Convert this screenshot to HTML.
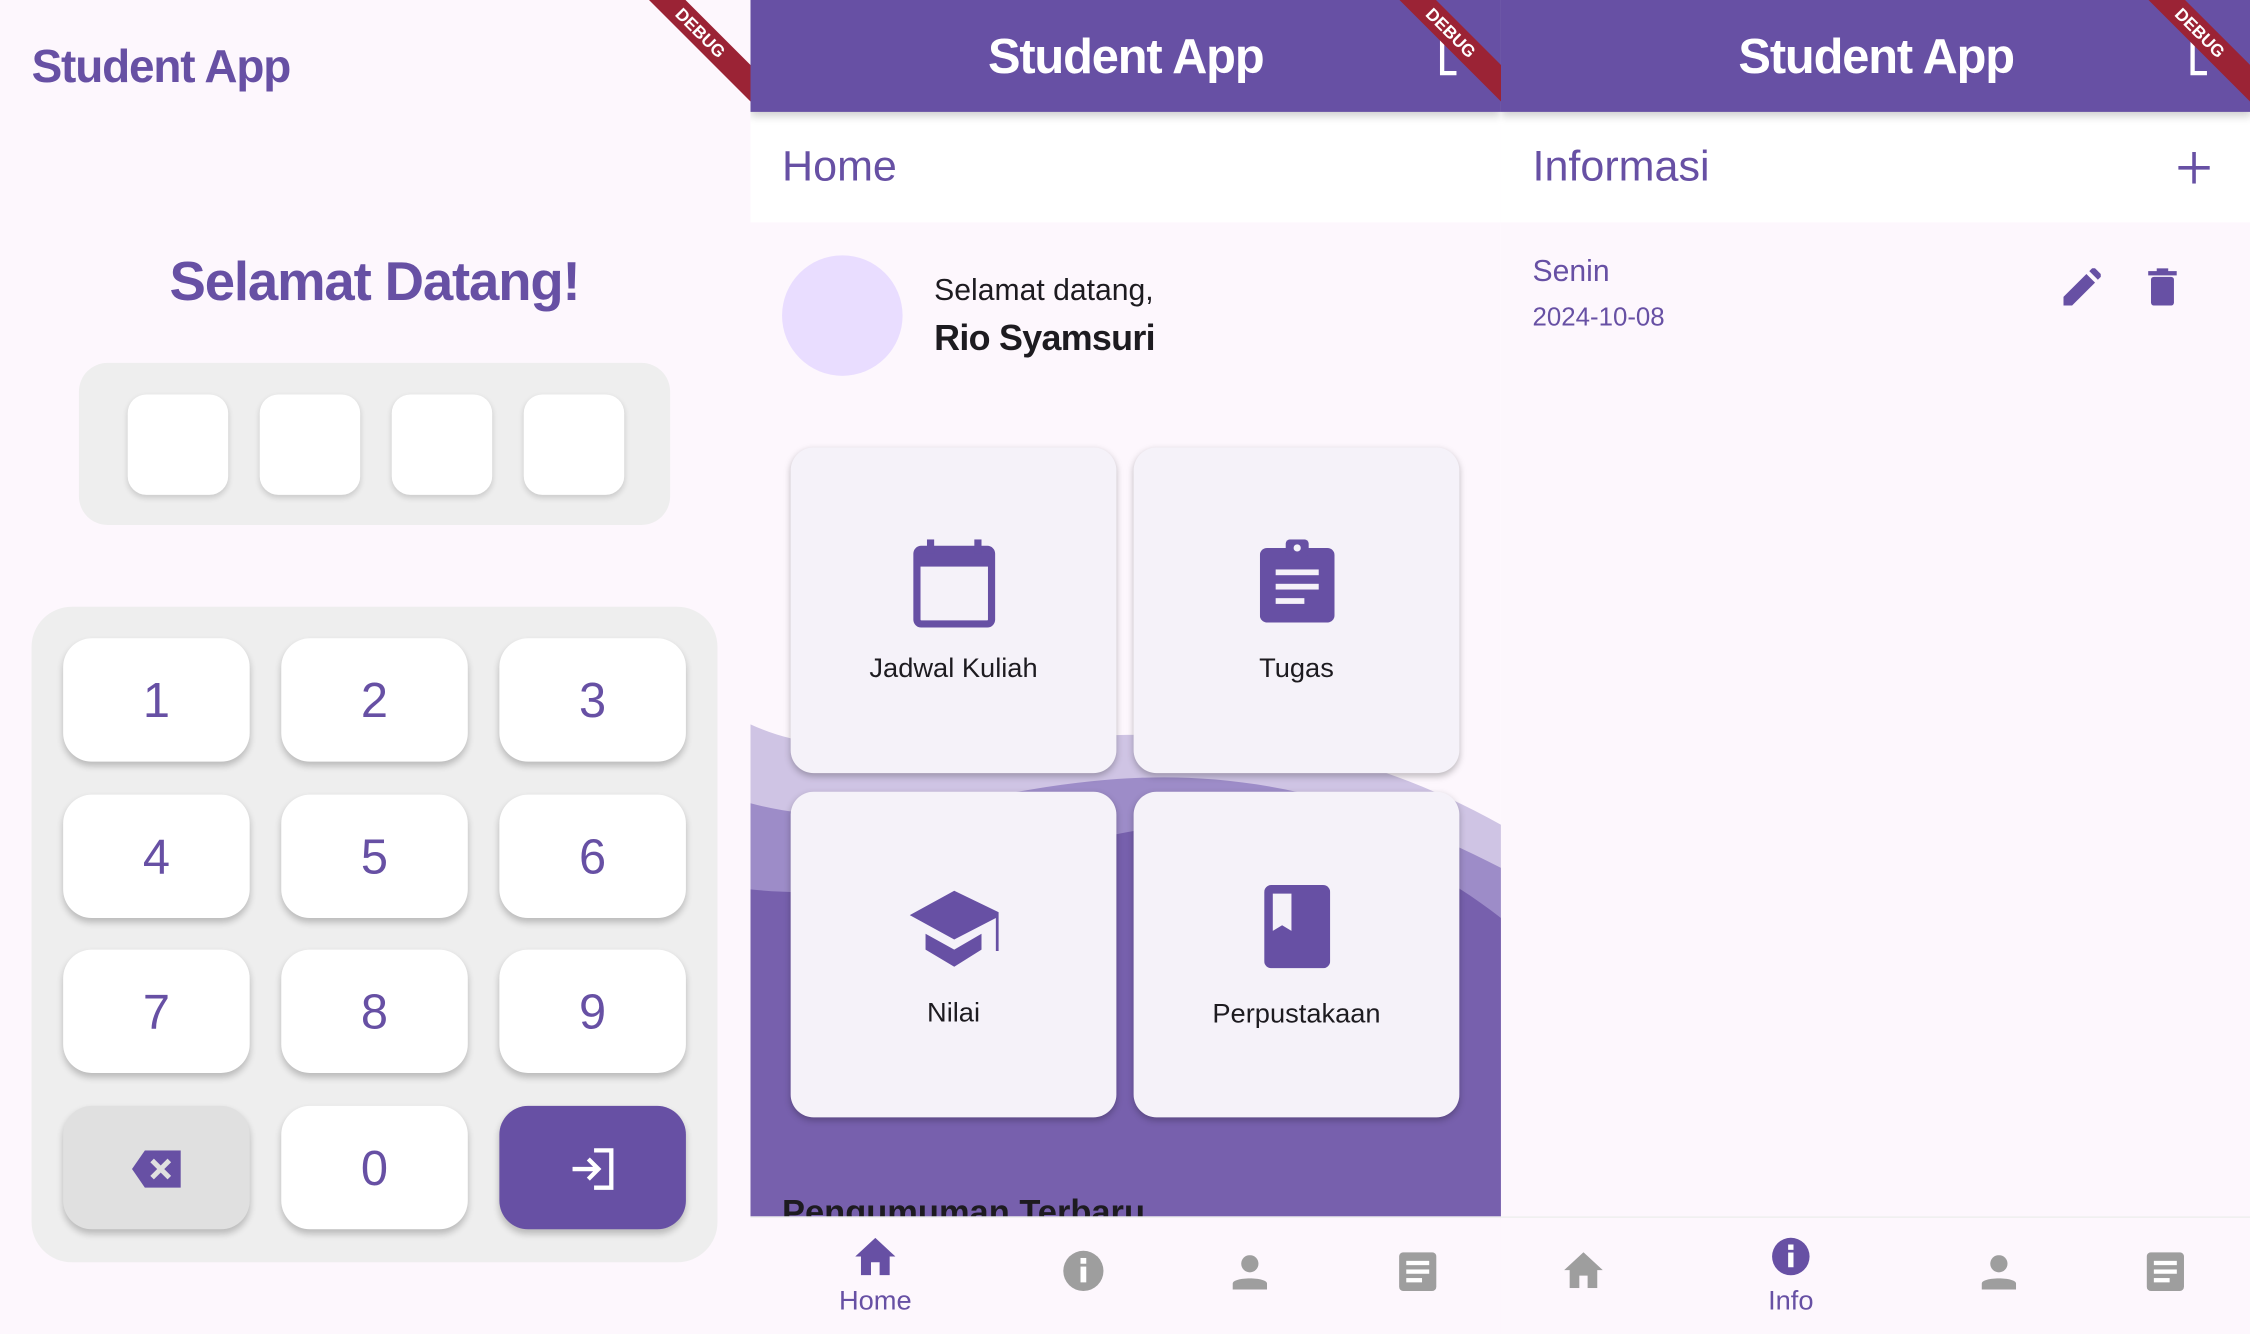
<!DOCTYPE html>
<html><head><meta charset="utf-8"><style>
*{margin:0;padding:0;box-sizing:border-box}
body{width:2250px;height:1334px;overflow:hidden;background:#fdf7fd;font-family:"Liberation Sans",sans-serif}
#w{width:1568px;height:930px;position:relative;transform:scale(1.43495,1.43441);transform-origin:0 0}
.a{position:absolute}
.panel{position:absolute;top:0;height:930px;width:523px;overflow:hidden;background:#fdf7fd}
.pin{position:absolute;top:22px;width:70px;height:70px;background:#fff;border-radius:13px;box-shadow:0 2px 4px rgba(0,0,0,.15)}
.key{position:absolute;width:130px;height:86px;background:#fff;border-radius:20px;box-shadow:0 3px 5px rgba(0,0,0,.22);color:#6750a4;font-size:34px;display:flex;align-items:center;justify-content:center;padding-top:2px}
.bar{position:absolute;left:0;top:0;width:523px;height:78px;background:#6750a4;color:#fff;font-size:34px;font-weight:bold;display:flex;align-items:center;justify-content:center;box-shadow:0 3px 6px rgba(0,0,0,.2);z-index:3;letter-spacing:-0.8px;padding-top:2px}
.sub{position:absolute;left:0;top:78px;width:523px;height:77px;background:#fff;color:#6750a4;font-size:30px;padding:22px 22px;z-index:2}
.card{position:absolute;width:227px;height:227px;background:#f5f2f9;border-radius:16px;box-shadow:0 2px 5px rgba(0,0,0,.25);text-align:center;font-size:19px;color:#1d1b20}
.ribbon{position:absolute;top:14px;right:-40px;width:150px;height:18px;background:#9b2335;color:#fff;font-size:12px;font-weight:bold;text-align:center;line-height:18px;transform:rotate(45deg);z-index:5}
.nav{position:absolute;left:0;top:848px;width:523px;height:82px;background:#fdf7fd;border-top:1px solid #eee;z-index:4}
.nl{position:absolute;top:48px;font-size:19px;color:#6750a4;transform:translateX(-50%)}
</style></head><body><div id="w">

<!-- Panel 1 -->
<div class="panel" style="left:0">
<div class="a" style="left:22px;top:28px;font-size:32px;font-weight:bold;color:#6750a4;letter-spacing:-0.8px">Student App</div>
<div class="a" style="left:0;width:522px;top:176px;text-align:center;font-size:38px;font-weight:bold;color:#6750a4;letter-spacing:-0.8px">Selamat Datang!</div>
<div class="a" style="left:55px;top:253px;width:412px;height:113px;background:#eee;border-radius:20px">
<div class="pin" style="left:34px"></div><div class="pin" style="left:126px"></div><div class="pin" style="left:218px"></div><div class="pin" style="left:310px"></div>
</div>
<div class="a" style="left:22px;top:423px;width:478px;height:457px;background:#eee;border-radius:28px"></div>
<div class="key" style="left:44px;top:445px">1</div><div class="key" style="left:196px;top:445px">2</div><div class="key" style="left:348px;top:445px">3</div>
<div class="key" style="left:44px;top:554px">4</div><div class="key" style="left:196px;top:554px">5</div><div class="key" style="left:348px;top:554px">6</div>
<div class="key" style="left:44px;top:662px">7</div><div class="key" style="left:196px;top:662px">8</div><div class="key" style="left:348px;top:662px">9</div>
<div class="key" style="left:44px;top:771px;background:#e0e0e0"><svg width="34" height="26" viewBox="0 0 34 26"><path d="M9 0H34V26H9L0 13Z" fill="#6750a4"/><path d="M14 7L26 19M26 7L14 19" stroke="#e0e0e0" stroke-width="3.5"/></svg></div>
<div class="key" style="left:196px;top:771px">0</div>
<div class="key" style="left:348px;top:771px;background:#6750a4"><svg width="32" height="30" viewBox="0 0 32 30"><path d="M17 2H29V28H17" fill="none" stroke="#fff" stroke-width="3"/><path d="M2 15H20M13 8L20 15L13 22" fill="none" stroke="#fff" stroke-width="3"/></svg></div>
<div class="ribbon">DEBUG</div>
</div>

<!-- Panel 2 -->
<div class="panel" style="left:523px">
<div class="bar">Student App</div>
<svg class="a" style="left:478px;top:24px;z-index:4" width="30" height="30" viewBox="0 0 30 30"><path d="M14 3H4V27H14" fill="none" stroke="#fff" stroke-width="3"/></svg>
<div class="sub">Home</div>
<div class="a" style="left:22px;top:178px;width:84px;height:84px;border-radius:50%;background:#e9ddff"></div>
<div class="a" style="left:128px;top:191px;font-size:21px;color:#1d1b20">Selamat datang,</div>
<div class="a" style="left:128px;top:222px;font-size:25px;font-weight:bold;color:#1d1b20;letter-spacing:-0.5px">Rio Syamsuri</div>
<svg class="a" style="left:0;top:400px" width="523" height="450" viewBox="0 400 523 450">
<path d="M0 505C120 560 300 450 523 575V850H0Z" fill="#cfc4e4"/>
<path d="M0 560C150 600 260 470 523 605V850H0Z" fill="#9d8cc8"/>
<path d="M0 620C180 640 330 490 523 640V850H0Z" fill="#7760ad"/>
</svg>
<div class="card" style="left:28px;top:312px"><svg style="margin-top:64px" width="58" height="62" viewBox="0 0 58 62"><rect x="3" y="7" width="52" height="52" rx="3" fill="none" stroke="#6750a4" stroke-width="5"/><rect x="3" y="7" width="52" height="12" fill="#6750a4"/><rect x="10" y="0" width="5" height="10" fill="#6750a4"/><rect x="43" y="0" width="5" height="10" fill="#6750a4"/></svg><div style="margin-top:12px">Jadwal Kuliah</div></div>
<div class="card" style="left:267px;top:312px"><svg style="margin-top:64px" width="52" height="58" viewBox="0 0 52 58"><rect x="0" y="6" width="52" height="52" rx="5" fill="#6750a4"/><rect x="18" y="0" width="16" height="12" rx="3" fill="#6750a4"/><circle cx="26" cy="6" r="2.5" fill="#f5f2f9"/><rect x="11" y="21" width="30" height="4" fill="#f5f2f9"/><rect x="11" y="31" width="30" height="4" fill="#f5f2f9"/><rect x="11" y="41" width="20" height="4" fill="#f5f2f9"/></svg><div style="margin-top:16px">Tugas</div></div>
<div class="card" style="left:28px;top:552px"><svg style="margin-top:66px" width="62" height="60" viewBox="0 0 62 60"><path d="M31 3L0 20L31 37L60 22V45H62V18Z" fill="#6750a4"/><path d="M11 33V44L31 56L50 44V33L31 44Z" fill="#6750a4"/></svg><div style="margin-top:12px">Nilai</div></div>
<div class="card" style="left:267px;top:552px"><svg style="margin-top:65px" width="46" height="58" viewBox="0 0 46 58"><rect width="46" height="58" rx="5" fill="#6750a4"/><path d="M6 6H19V32L12.5 28L6 32Z" fill="#f5f2f9"/></svg><div style="margin-top:16px">Perpustakaan</div></div>
<div class="a" style="left:22px;top:832px;font-size:24px;font-weight:bold;color:#1d1b20">Pengumuman Terbaru</div>
<div class="nav">
<svg class="a" style="left:73px;top:14px" width="28" height="26" viewBox="0 0 28 26"><path d="M14 0L28 13H24V26H17V17H11V26H4V13H0Z" fill="#6750a4"/></svg>
<div class="nl" style="left:87px">Home</div>
<svg class="a" style="left:217px;top:22px" width="30" height="30" viewBox="0 0 30 30"><circle cx="15" cy="15" r="14" fill="#9e9e9e"/><rect x="13" y="12" width="4" height="11" fill="#fff"/><rect x="13" y="6" width="4" height="4" fill="#fff"/></svg>
<svg class="a" style="left:336px;top:26px" width="24" height="24" viewBox="0 0 24 24"><circle cx="12" cy="6" r="6" fill="#9e9e9e"/><path d="M0 24V20C0 15 24 15 24 20V24Z" fill="#9e9e9e"/></svg>
<svg class="a" style="left:452px;top:24px" width="26" height="27" viewBox="0 0 26 27"><rect width="26" height="27" rx="3" fill="#9e9e9e"/><rect x="5" y="6" width="16" height="3" fill="#fff"/><rect x="5" y="12" width="16" height="3" fill="#fff"/><rect x="5" y="18" width="11" height="3" fill="#fff"/></svg>
</div>
<div class="ribbon">DEBUG</div>
</div>

<!-- Panel 3 -->
<div class="panel" style="left:1046px;width:522px">
<div class="bar">Student App</div>
<svg class="a" style="left:478px;top:24px;z-index:4" width="30" height="30" viewBox="0 0 30 30"><path d="M14 3H4V27H14" fill="none" stroke="#fff" stroke-width="3"/></svg>
<div class="sub">Informasi</div>
<svg class="a" style="left:472px;top:106px;z-index:3" width="22" height="22" viewBox="0 0 22 22"><path d="M11 0V22M0 11H22" stroke="#6750a4" stroke-width="2.5"/></svg>
<div class="a" style="left:22px;top:178px;font-size:21px;color:#6750a4">Senin</div>
<div class="a" style="left:22px;top:211px;font-size:18px;color:#6750a4">2024-10-08</div>
<svg class="a" style="left:392px;top:187px" width="26" height="26" viewBox="0 0 26 26"><path d="M0 20V26H6L22 10L16 4Z" fill="#6750a4"/><path d="M18 2L21 -1L27 5L24 8Z" fill="#6750a4"/></svg>
<svg class="a" style="left:451px;top:187px" width="20" height="26" viewBox="0 0 20 26"><rect x="2" y="6" width="16" height="20" rx="2" fill="#6750a4"/><rect x="0" y="2" width="20" height="3" fill="#6750a4"/><rect x="6" y="0" width="8" height="3" fill="#6750a4"/></svg>
<div class="nav" style="width:522px">
<svg class="a" style="left:44px;top:24px" width="27" height="25" viewBox="0 0 28 26"><path d="M14 0L28 13H24V26H17V17H11V26H4V13H0Z" fill="#9e9e9e"/></svg>
<svg class="a" style="left:188px;top:13px" width="28" height="28" viewBox="0 0 30 30"><circle cx="15" cy="15" r="14" fill="#6750a4"/><rect x="13" y="12" width="4" height="11" fill="#fff"/><rect x="13" y="6" width="4" height="4" fill="#fff"/></svg>
<div class="nl" style="left:202px">Info</div>
<svg class="a" style="left:335px;top:26px" width="24" height="24" viewBox="0 0 24 24"><circle cx="12" cy="6" r="6" fill="#9e9e9e"/><path d="M0 24V20C0 15 24 15 24 20V24Z" fill="#9e9e9e"/></svg>
<svg class="a" style="left:450px;top:24px" width="26" height="27" viewBox="0 0 26 27"><rect width="26" height="27" rx="3" fill="#9e9e9e"/><rect x="5" y="6" width="16" height="3" fill="#fff"/><rect x="5" y="12" width="16" height="3" fill="#fff"/><rect x="5" y="18" width="11" height="3" fill="#fff"/></svg>
</div>
<div class="ribbon">DEBUG</div>
</div>

</div></body></html>
